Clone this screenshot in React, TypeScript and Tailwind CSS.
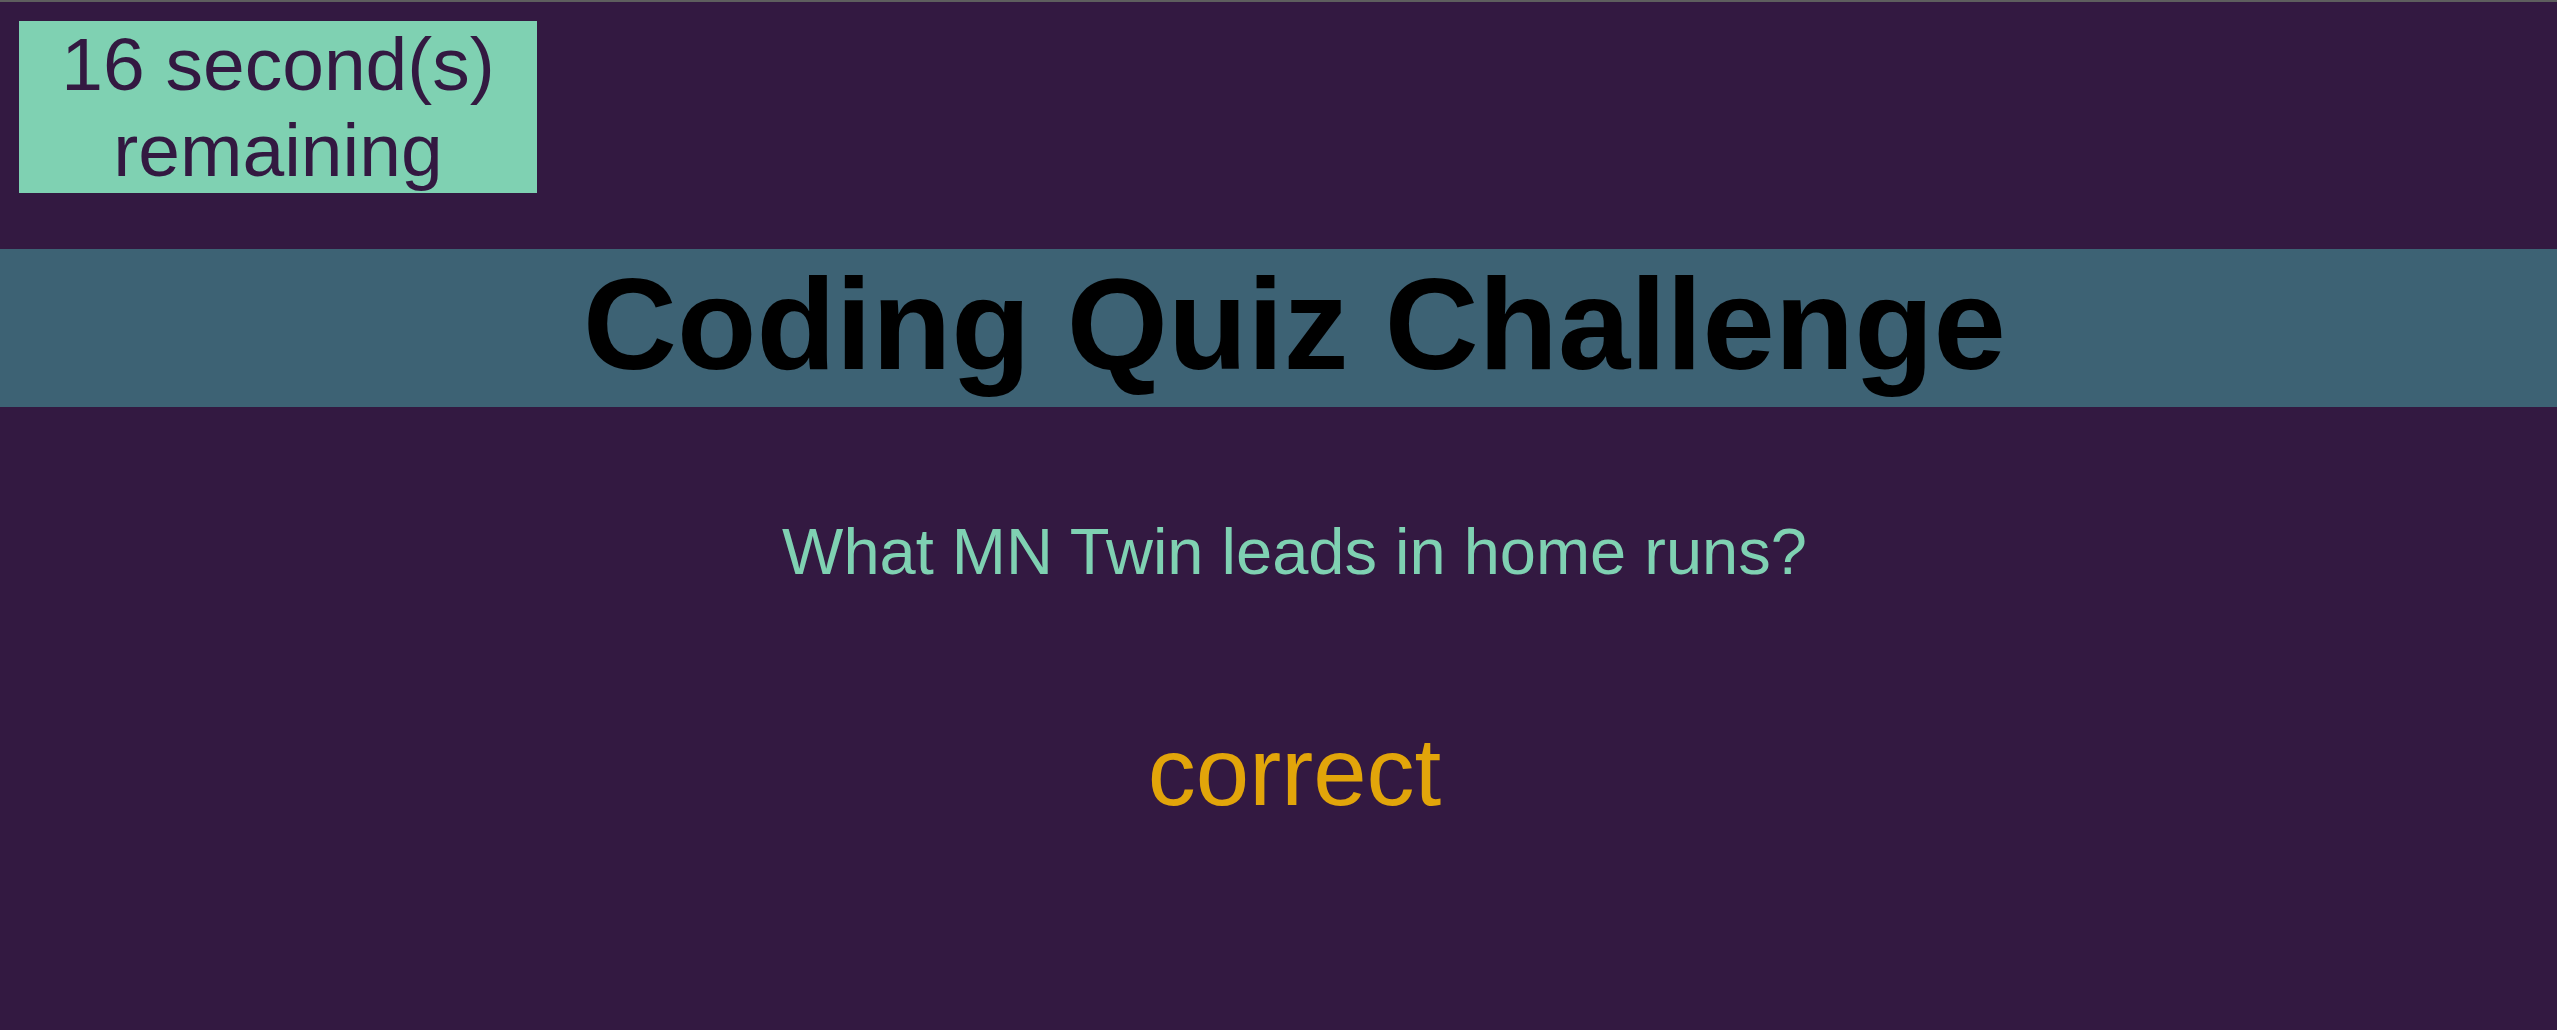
export default function App() {
  const secondsLeft = 16

  return (
    <div
      className="min-h-screen border-t-2 border-[#5e5e5e] bg-[#331941]"
      style={{ fontFamily: '"Liberation Sans", Arial, sans-serif' }}
    >
      <div className="ml-[19px] mt-[19px] w-[518px] bg-[#7fd1b2] text-center text-[75px] leading-[86px] text-[#331941]">
        {secondsLeft} second(s) remaining
      </div>

      <header className="mt-[56px] h-[158px] bg-[#3d6274] pl-[32px]">
        <h1 className="text-center text-[130px] font-bold leading-[150px] text-black">
          Coding Quiz Challenge
        </h1>
      </header>

      <main className="pl-[32px] text-center">
        <p className="mt-[107px] text-[65px] leading-[75px] text-[#7fd1b2]">
          What MN Twin leads in home runs?
        </p>
        <p className="mt-[128px] text-[96px] leading-[110px] text-[#e2a50a]">correct</p>
      </main>
    </div>
  )
}
